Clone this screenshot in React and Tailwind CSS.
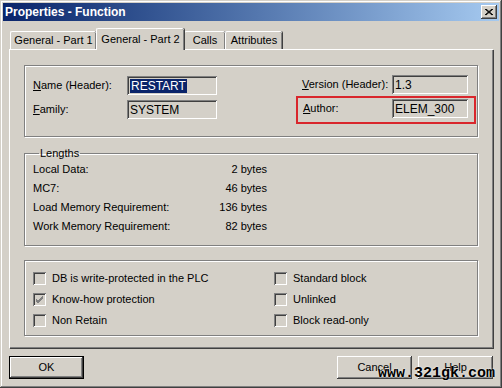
import React from 'react';

const raised = 'shadow-[inset_-1px_-1px_#404040,inset_1px_1px_#ffffff,inset_-2px_-2px_#808080]';
const sunken = 'shadow-[inset_1px_1px_#808080,inset_-1px_-1px_#ffffff,inset_2px_2px_#404040,inset_-2px_-2px_#d4d0c8]';
const etched = 'border border-[#808080] shadow-[1px_1px_0_#ffffff,inset_1px_1px_0_#ffffff]';

const Field = ({ value, width, selected }) => (
    <div className={`h-[19px] ${width} ${sunken} bg-[#d4d0c8] flex items-center pl-[3px] text-[12px] text-black`}>
        {selected ? <span className="bg-[#0a246a] text-white px-[1px] leading-[14px]">{value}</span> : value}
    </div>
);

const Check = ({ label, checked }) => (
    <div className="flex items-center h-[21px]">
        <div className={`w-[13px] h-[13px] ${sunken} bg-[#d4d0c8] flex items-center justify-center`}>
            {checked && (
                <svg width="9" height="9" viewBox="0 0 9 9">
                    <path d="M1 4 L3 6 L8 1 M1 5 L3 7 L8 2 M1 6 L3 8 L8 3" stroke="#808080" strokeWidth="1" fill="none" />
                </svg>
            )}
        </div>
        <span className="ml-[6px]">{label}</span>
    </div>
);

const Tab = ({ label, active, className = '' }) => (
    <div
        className={`relative flex items-center justify-center whitespace-nowrap border-t border-l border-white shadow-[inset_-1px_0_#808080,1px_0_#404040] rounded-t-[2px] ${
            active ? 'h-[22px] -mb-px bg-[#d4d0c8] z-10' : 'h-[18px]'
        } ${className}`}
    >
        {label}
    </div>
);

const Button = ({ label, isDefault }) => (
    <div
        className={`w-[75px] h-[23px] flex items-center justify-center ${
            isDefault ? 'border border-black shadow-[inset_-1px_-1px_#404040,inset_1px_1px_#ffffff,inset_-2px_-2px_#808080]' : raised
        }`}
    >
        {label}
    </div>
);

const lengths = [
    ['Local Data:', '2 bytes'],
    ['MC7:', '46 bytes'],
    ['Load Memory Requirement:', '136 bytes'],
    ['Work Memory Requirement:', '82 bytes'],
];

export default function App() {
    return (
        <div className="relative w-[502px] h-[388px] bg-[#d4d0c8] text-[11px] text-black font-['Liberation_Sans',Arial,sans-serif] shadow-[inset_-1px_-1px_#404040,inset_1px_1px_#d4d0c8,inset_-2px_-2px_#808080,inset_2px_2px_#ffffff] pt-[3px] px-[3px] overflow-hidden">
            {/* Title bar */}
            <div className="h-[18px] bg-gradient-to-r from-[#0a246a] to-[#a6caf0] flex items-center justify-between pl-[2px] pr-[2px]">
                <span className="text-white font-bold text-[12px]">Properties - Function</span>
                <div className={`w-[16px] h-[14px] bg-[#d4d0c8] ${raised} flex items-center justify-center`}>
                    <svg width="8" height="7" viewBox="0 0 8 7">
                        <path d="M0 0 L7 6 M1 0 L8 6 M7 0 L0 6 M8 0 L1 6" stroke="#000" strokeWidth="1" fill="none" />
                    </svg>
                </div>
            </div>

            {/* Tabs */}
            <div className="ml-[6px] mt-[6px] flex items-end h-[22px]">
                <Tab label="General - Part 1" className="ml-[1px] w-[86px]" />
                <Tab label="General - Part 2" active className="w-[88px]" />
                <Tab label="Calls" className="w-[41px]" />
                <Tab label="Attributes" className="w-[57px]" />
            </div>

            {/* Tab panel */}
            <div className="ml-[6px] w-[484px] h-[299px] border-t border-l border-white shadow-[inset_-1px_-1px_#808080,1px_1px_#404040] pt-[15px] pl-[14px]">
                {/* Header group */}
                <div className={`relative w-[454px] h-[72px] ${etched} flex`}>
                    <div className="flex flex-col gap-[5px] pt-[10px] pl-[8px]">
                        <div className="flex items-center">
                            <span className="w-[94px]"><u>N</u>ame (Header):</span>
                            <Field value="RESTART" width="w-[90px]" selected />
                        </div>
                        <div className="flex items-center">
                            <span className="w-[94px]"><u>F</u>amily:</span>
                            <Field value="SYSTEM" width="w-[90px]" />
                        </div>
                    </div>
                    <div className="ml-auto mr-[1px] flex flex-col pt-[9px] w-[180px]">
                        <div className="flex items-center pl-[6px]">
                            <span className="w-[90px]"><u>V</u>ersion (Header):</span>
                            <Field value="1.3" width="w-[76px]" />
                        </div>
                        <div className="mt-[2px] border-2 border-[#d9262c] flex items-center pl-[5px] pt-[1px] pb-[4px]">
                            <span className="w-[89px]"><u>A</u>uthor:</span>
                            <Field value="ELEM_300" width="w-[76px]" />
                        </div>
                    </div>
                </div>

                {/* Lengths group */}
                <fieldset className={`mt-[9px] w-[454px] h-[100px] ${etched} pl-[8px]`}>
                    <legend className="ml-[6px] px-[1px] leading-[14px]">Lengths</legend>
                    <div className="flex flex-col w-[234px]">
                        {lengths.map(([label, value]) => (
                            <div key={label} className="flex justify-between h-[19px] items-center">
                                <span>{label}</span>
                                <span>{value}</span>
                            </div>
                        ))}
                    </div>
                </fieldset>

                {/* Options group */}
                <div className={`mt-[14px] w-[454px] h-[76px] ${etched} pt-[7px] pl-[8px] flex`}>
                    <div className="w-[241px] flex flex-col">
                        <Check label="DB is write-protected in the PLC" />
                        <Check label="Know-how protection" checked />
                        <Check label="Non Retain" />
                    </div>
                    <div className="flex flex-col">
                        <Check label="Standard block" />
                        <Check label="Unlinked" />
                        <Check label="Block read-only" />
                    </div>
                </div>
            </div>

            {/* Buttons */}
            <div className="mt-[8px] ml-[6px] w-[484px] flex">
                <Button label="OK" isDefault />
                <div className="ml-auto flex gap-[6px]">
                    <Button label="Cancel" />
                    <Button label="Help" />
                </div>
            </div>

            {/* Watermark */}
            <div className="absolute left-[378px] top-[364px] font-['Liberation_Mono',monospace] font-bold text-[15px] leading-[20px] text-black [text-shadow:0_0_2px_#ffffff]">
                www.321gk.com
            </div>
        </div>
    );
}
